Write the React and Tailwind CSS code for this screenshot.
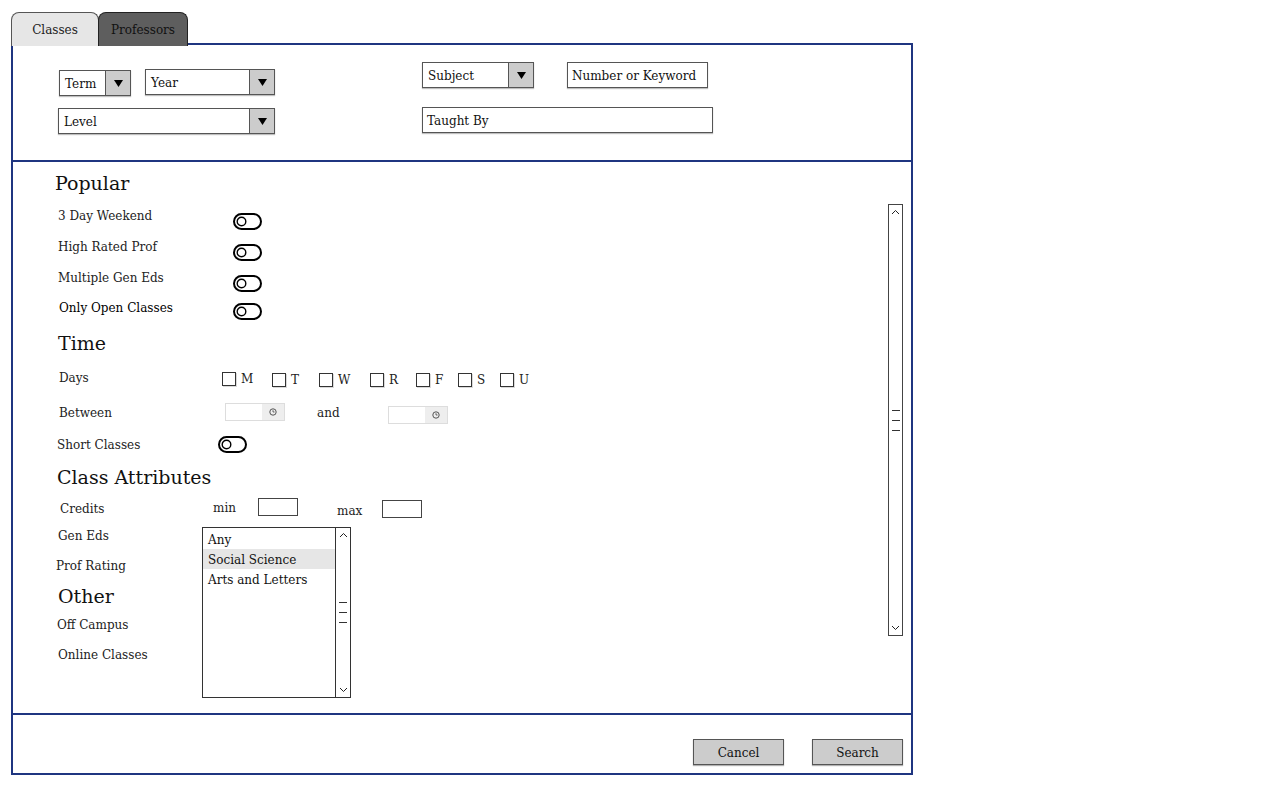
import React from 'react';

const font = { fontFamily: '"DejaVu Serif", "Liberation Serif", serif' };

const Arrow = () => (
  <div className="w-[25px] h-full border-l border-[#555] bg-[#cccccc] flex items-center justify-center">
    <svg width="9" height="8" viewBox="0 0 9 8"><path d="M0 1h9L4.5 8z" fill="#000" /></svg>
  </div>
);

const Dropdown = ({ label, className }) => (
  <div className={`h-[26px] border border-[#555] bg-white flex items-stretch shadow-[0_1px_1px_rgba(0,0,0,0.25)] ${className}`}>
    <div className="flex-1 flex items-center pl-[5px] pt-[2px] text-[12px] text-[#111]">{label}</div>
    <Arrow />
  </div>
);

const TextBox = ({ label, className }) => (
  <div className={`h-[26px] border border-[#555] bg-white flex items-center pl-[4px] pt-px text-[12px] text-[#111] shadow-[0_1px_1px_rgba(0,0,0,0.25)] ${className}`}>
    {label}
  </div>
);

const Toggle = ({ className = '' }) => (
  <svg className={className} width="29" height="17" viewBox="0 0 29 17">
    <rect x="1" y="1" width="27" height="15" rx="7.5" fill="#fff" stroke="#000" strokeWidth="2" />
    <circle cx="8.5" cy="8.5" r="4.3" fill="#fff" stroke="#000" strokeWidth="1.4" />
  </svg>
);

const Chevron = ({ up }) => (
  <svg width="9" height="6" viewBox="0 0 9 6">
    <path d={up ? 'M1 5L4.5 1.5L8 5' : 'M1 1L4.5 4.5L8 1'} fill="none" stroke="#222" strokeWidth="1" />
  </svg>
);

const Grip = () => (
  <div className="flex flex-col gap-[9px] items-center">
    <div className="w-[8px] h-px bg-[#333]" />
    <div className="w-[8px] h-px bg-[#333]" />
    <div className="w-[8px] h-px bg-[#333]" />
  </div>
);

const TimeInput = ({ className = '' }) => (
  <div className={`w-[60px] h-[18px] border border-[#dddddd] bg-white flex ${className}`}>
    <div className="flex-1" />
    <div className="w-[22px] bg-[#eeeeee] flex items-center justify-center">
      <svg width="8" height="8" viewBox="0 0 8 8">
        <circle cx="4" cy="4" r="3.2" fill="none" stroke="#444" strokeWidth="0.9" />
        <path d="M4 2.2V4h1.5" fill="none" stroke="#444" strokeWidth="0.8" />
      </svg>
    </div>
  </div>
);

const Check = ({ label, className = '' }) => (
  <div className={`flex items-center ${className}`}>
    <div className="w-[14px] h-[14px] border border-[#333] bg-white shadow-[1px_1px_0_rgba(0,0,0,0.15)]" />
    <span className="ml-[5px] text-[12px] text-[#222]">{label}</span>
  </div>
);

const Heading = ({ children, className = '' }) => (
  <div className={`h-[24px] flex items-center text-[19px] text-[#111] ${className}`}>{children}</div>
);

const Label = ({ children, className = '' }) => (
  <div className={`h-[20px] flex items-center pt-[2px] text-[12px] text-[#222] ${className}`}>{children}</div>
);

export default function App() {
  const popular = [
    { label: '3 Day Weekend', h: 'h-[31px]' },
    { label: 'High Rated Prof', h: 'h-[31px]' },
    { label: 'Multiple Gen Eds', h: 'h-[30px]' },
  ];

  return (
    <div className="w-[1280px] h-[800px] bg-white pt-[12px] pl-[11px]" style={font}>
      {/* Tabs */}
      <div className="relative z-10 flex h-[34px]">
        <div className="w-[88px] h-[34px] bg-[#e6e6e6] border border-[#555] border-b-0 rounded-t-[8px] flex items-center justify-center text-[12px] text-[#222]">
          Classes
        </div>
        <div className="-ml-px w-[90px] h-[34px] bg-[#5e5e5e] border border-[#222] border-b-0 rounded-t-[8px] flex items-center justify-center text-[12px] text-[#111]">
          Professors
        </div>
      </div>

      {/* Frame */}
      <div className="-mt-[3px] w-[902px] h-[732px] border-2 border-[#1f3580] flex flex-col">
        {/* Filters */}
        <div className="h-[117px] border-b-2 border-[#1f3580] flex items-start">
          <div className="ml-[45px] mt-[24px] flex flex-col">
            <div className="flex items-start">
              <Dropdown label="Term" className="ml-px mt-px w-[72px]" />
              <Dropdown label="Year" className="ml-[14px] w-[130px]" />
            </div>
            <Dropdown label="Level" className="mt-[12px] w-[217px]" />
          </div>
          <div className="ml-[147px] mt-[17px] flex flex-col">
            <div className="flex items-start">
              <Dropdown label="Subject" className="w-[112px]" />
              <TextBox label="Number or Keyword" className="ml-[33px] w-[141px]" />
            </div>
            <TextBox label="Taught By" className="mt-[19px] w-[291px]" />
          </div>
        </div>

        {/* Options */}
        <div className="flex-1 flex">
          <div className="flex-1 pl-[42px] flex flex-col">
            <Heading className="mt-[9px]">Popular</Heading>
            <div className="mt-[10px] ml-[3px]">
              {popular.map((p) => (
                <div key={p.label} className={`flex items-start ${p.h}`}>
                  <Label className="w-[175px]">{p.label}</Label>
                  <Toggle className="mt-[8px]" />
                </div>
              ))}
              <div className="flex items-start h-[30px]">
                <Label className="w-[175px] pl-px text-black">Only Open Classes</Label>
                <Toggle className="mt-[6px]" />
              </div>
            </div>

            <Heading className="mt-[4px] ml-[3px]">Time</Heading>
            <div className="mt-[12px] ml-[4px] flex items-start h-[35px]">
              <Label className="w-[163px]">Days</Label>
              <div className="flex items-start mt-[3px]">
                <Check label="M" className="w-[50px]" />
                <Check label="T" className="w-[47px] mt-[1px]" />
                <Check label="W" className="w-[51px] mt-[1px]" />
                <Check label="R" className="w-[46px] mt-[1px]" />
                <Check label="F" className="w-[42px] mt-[1px]" />
                <Check label="S" className="w-[42px] mt-[1px]" />
                <Check label="U" className="mt-[1px]" />
              </div>
            </div>
            <div className="ml-[4px] flex items-start h-[32px]">
              <Label className="w-[166px]">Between</Label>
              <TimeInput className="mt-px" />
              <Label className="ml-[32px] w-[71px]">and</Label>
              <TimeInput className="mt-[4px]" />
            </div>
            <div className="ml-[2px] flex items-start h-[30px]">
              <Label className="w-[161px]">Short Classes</Label>
              <Toggle className="mt-[2px]" />
            </div>

            <Heading className="mt-px ml-[2px]">Class Attributes</Heading>
            <div className="mt-[9px] ml-[5px] flex items-start h-[27px]">
              <Label className="w-[153px]">Credits</Label>
              <Label className="-mt-px w-[45px]">min</Label>
              <div className="w-[40px] h-[18px] border border-[#444] bg-white" />
              <Label className="ml-[39px] mt-[2px] w-[45px]">max</Label>
              <div className="mt-[2px] w-[40px] h-[18px] border border-[#444] bg-white" />
            </div>

            <div className="flex items-start">
              <div className="w-[147px] flex flex-col">
                <Label className="ml-[3px]">Gen Eds</Label>
                <Label className="mt-[10px] ml-px">Prof Rating</Label>
                <Heading className="mt-[9px] ml-[3px]">Other</Heading>
                <Label className="mt-[6px] ml-[2px]">Off Campus</Label>
                <Label className="mt-[10px] ml-[3px]">Online Classes</Label>
              </div>
              <div className="mt-[2px] w-[149px] h-[171px] border border-[#333] bg-white flex">
                <div className="flex-1 pt-[1px] flex flex-col text-[12px] text-[#111]">
                  <div className="h-[20px] flex items-center pl-[5px] pt-px">Any</div>
                  <div className="h-[20px] flex items-center pl-[5px] pt-px bg-[#e6e6e6]">Social Science</div>
                  <div className="h-[20px] flex items-center pl-[5px] pt-px">Arts and Letters</div>
                </div>
                <div className="w-[15px] border-l border-[#333] flex flex-col items-center justify-between py-[4px]">
                  <Chevron up />
                  <Grip />
                  <Chevron />
                </div>
              </div>
            </div>
          </div>

          {/* Main scrollbar */}
          <div className="mt-[42px] mr-[8px] w-[15px] h-[432px] border border-[#444] bg-white flex flex-col items-center justify-between py-[4px]">
            <Chevron up />
            <Grip />
            <Chevron />
          </div>
        </div>

        {/* Actions */}
        <div className="h-[60px] border-t-2 border-[#1f3580] flex justify-end items-start pt-[24px] pr-[8px]">
          <div className="w-[91px] h-[26px] border border-[#555] bg-[#cccccc] flex items-center justify-center pt-[2px] text-[12px] text-[#111] shadow-[0_1px_1px_rgba(0,0,0,0.3)]">
            Cancel
          </div>
          <div className="ml-[28px] w-[91px] h-[26px] border border-[#555] bg-[#cccccc] flex items-center justify-center pt-[2px] text-[12px] text-[#111] shadow-[0_1px_1px_rgba(0,0,0,0.3)]">
            Search
          </div>
        </div>
      </div>
    </div>
  );
}
